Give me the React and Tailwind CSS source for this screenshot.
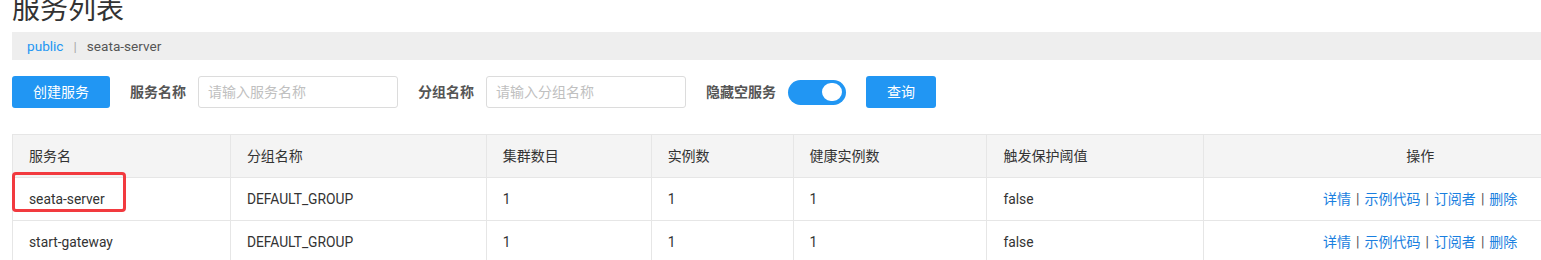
const columns = [
  { title: '服务名', width: 'w-[218px]' },
  { title: '分组名称', width: 'w-[256px]' },
  { title: '集群数目', width: 'w-[165px]' },
  { title: '实例数', width: 'w-[142px]' },
  { title: '健康实例数', width: 'w-[194px]' },
  { title: '触发保护阈值', width: 'w-[217px]' },
]

const rows = [
  ['seata-server', 'DEFAULT_GROUP', '1', '1', '1', 'false'],
  ['start-gateway', 'DEFAULT_GROUP', '1', '1', '1', 'false'],
]

const actions = ['详情', '示例代码', '订阅者', '删除']

const Label = ({ children }) => (
  <span className="text-[14px] font-bold text-[#555]">{children}</span>
)

const Input = ({ placeholder }) => (
  <div className="flex h-[32px] w-[200px] items-center rounded-[3px] border border-[#dcdcdc] px-[9px] text-[14px] text-[#c0c0c0]">
    {placeholder}
  </div>
)

export default function App() {
  return (
    <div className="relative h-[260px] w-[1541px] overflow-hidden bg-white font-['Roboto','Noto_Sans_CJK_SC',sans-serif] text-[#333]">
      <h1 className="-mt-[6px] ml-[12px] text-[28px] leading-[32px] font-normal text-[#333]">服务列表</h1>

      <div className="ml-[12px] mt-[6px] flex h-[28px] items-center bg-[#eeeeee] pl-[15px] text-[13.6px]">
        <span className="text-[#2196f3]">public</span>
        <span className="mx-[10px] text-[#aaa]">|</span>
        <span className="text-[#555]">seata-server</span>
      </div>

      <div className="ml-[12px] mt-[16px] flex h-[32px] items-center">
        <button className="h-[32px] w-[98px] rounded-[3px] bg-[#2196f3] text-[14px] text-white">创建服务</button>
        <div className="ml-[20px] flex items-center gap-[12px]">
          <Label>服务名称</Label>
          <Input placeholder="请输入服务名称" />
        </div>
        <div className="ml-[20px] flex items-center gap-[12px]">
          <Label>分组名称</Label>
          <Input placeholder="请输入分组名称" />
        </div>
        <div className="ml-[20px] flex items-center gap-[12px]">
          <Label>隐藏空服务</Label>
          <div className="flex h-[25px] w-[58px] items-center justify-end rounded-full bg-[#2196f3] pr-[2px]">
            <div className="h-[22px] w-[24px] rounded-full border-2 border-[#2196f3] bg-white" />
          </div>
        </div>
        <button className="ml-[20px] h-[32px] w-[70px] rounded-[3px] bg-[#2196f3] text-[14px] text-white">查询</button>
      </div>

      <div className="ml-[12px] mt-[26px] w-[1624px] border-l border-t border-[#e6e6e6] text-[13.8px]">
        <div className="flex h-[43px] border-b border-[#e6e6e6] bg-[#f4f4f4]">
          {columns.map((c) => (
            <div key={c.title} className={`${c.width} flex items-center border-r border-[#e6e6e6] pl-[16px] text-[14px]`}>
              {c.title}
            </div>
          ))}
          <div className="flex w-[432px] items-center justify-center text-[14px]">操作</div>
        </div>
        {rows.map((r) => (
          <div key={r[0]} className="flex h-[43px] border-b border-[#e6e6e6]">
            {r.map((v, i) => (
              <div key={i} className={`${columns[i].width} flex items-center border-r border-[#e6e6e6] pl-[16px]`}>
                {v}
              </div>
            ))}
            <div className="flex w-[432px] items-center justify-center text-[14px] text-[#1a7fe0]">
              {actions.map((a, i) => (
                <span key={a} className="flex items-center">
                  {i > 0 && <span className="mx-[5px] text-[#555]">|</span>}
                  <a href="#">{a}</a>
                </span>
              ))}
            </div>
          </div>
        ))}
      </div>

      <div className="absolute left-[12px] top-[172px] h-[40px] w-[114px] rounded-[4px] border-[3px] border-[#f23a3f]" />
    </div>
  )
}
